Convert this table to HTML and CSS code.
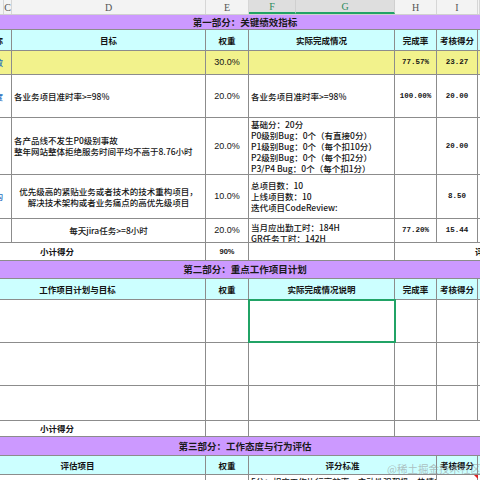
FILE: index.html
```html
<!DOCTYPE html>
<html lang="zh-CN">
<head>
<meta charset="utf-8">
<title>绩效考核表</title>
<link rel="stylesheet" href="styles.css">
</head>
<body>
<div class="sheet">
  <div class="colhead">
    <div class="ch"></div>
    <div class="ch">C</div>
    <div class="ch">D</div>
    <div class="ch">E</div>
    <div class="ch sel">F</div>
    <div class="ch sel">G</div>
    <div class="ch">H</div>
    <div class="ch">I</div>
    <div class="ch"></div>
  </div>

  <div class="sec s1">第一部分：关键绩效指标</div>

  <div class="row head h21">
    <div class="c cut"><span>指标名称</span></div>
    <div class="c ctr">目标</div>
    <div class="c ctr">权重</div>
    <div class="c ctr">实际完成情况</div>
    <div class="c ctr">完成率</div>
    <div class="c ctr">考核得分</div>
    <div class="c nb"></div>
  </div>

  <div class="row yellow h24">
    <div class="c cut blue"><span>关键绩效</span></div>
    <div class="c"></div>
    <div class="c ctr pct">30.0%</div>
    <div class="c"></div>
    <div class="c ctr num">77.57%</div>
    <div class="c ctr num">23.27</div>
    <div class="c nb"></div>
  </div>

  <div class="row h43">
    <div class="c cut blue"><span>项目进度</span></div>
    <div class="c">各业务项目准时率&gt;=98%</div>
    <div class="c ctr pct">20.0%</div>
    <div class="c">各业务项目准时率&gt;=98%</div>
    <div class="c ctr num">100.00%</div>
    <div class="c ctr num">20.00</div>
    <div class="c nb"></div>
  </div>

  <div class="row h57">
    <div class="c cut"></div>
    <div class="c"><div class="txt">各产品线不发生P0级别事故<br>整年网站整体拒绝服务时间平均不高于8.76小时</div></div>
    <div class="c ctr pct">20.0%</div>
    <div class="c"><div class="txt">基础分：20分<br>P0级别Bug：0个（有直接0分）<br>P1级别Bug：0个（每个扣10分）<br>P2级别Bug：0个（每个扣2分）<br>P3/P4 Bug：0个（每个扣1分）</div></div>
    <div class="c"></div>
    <div class="c ctr num">20.00</div>
    <div class="c nb"></div>
  </div>

  <div class="row h44">
    <div class="c cut blue"><span>技术重构</span></div>
    <div class="c ctr"><div class="txt">优先级高的紧贴业务或者技术的技术重构项目，<br>解决技术架构或者业务痛点的高优先级项目</div></div>
    <div class="c ctr pct">10.0%</div>
    <div class="c"><div class="txt">总项目数：10<br>上线项目数：10<br>迭代项目CodeReview:</div></div>
    <div class="c"></div>
    <div class="c ctr num">8.50</div>
    <div class="c nb"></div>
  </div>

  <div class="row h24">
    <div class="c cut"></div>
    <div class="c ctr">每天jira任务&gt;=8小时</div>
    <div class="c ctr pct">20.0%</div>
    <div class="c low"><div class="txt">当月应出勤工时：184H<br>GR任务工时：142H</div></div>
    <div class="c ctr num">77.20%</div>
    <div class="c ctr num">15.44</div>
    <div class="c nb"></div>
  </div>

  <div class="row h18">
    <div class="c span2 subtotal">小计得分</div>
    <div class="c ctr total">90%</div>
    <div class="c"></div>
    <div class="c nb span3 tail">评分</div>
  </div>

  <div class="sec s2">第二部分：重点工作项目计划</div>

  <div class="row head h21">
    <div class="c span2 ctr lefthead">工作项目计划与目标</div>
    <div class="c ctr">权重</div>
    <div class="c ctr">实际完成情况说明</div>
    <div class="c ctr">完成率</div>
    <div class="c ctr">考核得分</div>
    <div class="c nb"></div>
  </div>

  <div class="row h43">
    <div class="c span2"></div>
    <div class="c"></div>
    <div class="c selected"></div>
    <div class="c"></div>
    <div class="c"></div>
    <div class="c nb"></div>
  </div>

  <div class="row h43">
    <div class="c span2"></div>
    <div class="c"></div>
    <div class="c"></div>
    <div class="c"></div>
    <div class="c"></div>
    <div class="c nb"></div>
  </div>

  <div class="row h35">
    <div class="c span2"></div>
    <div class="c"></div>
    <div class="c"></div>
    <div class="c"></div>
    <div class="c"></div>
    <div class="c nb"></div>
  </div>

  <div class="row h16">
    <div class="c span2 subtotal">小计得分</div>
    <div class="c"></div>
    <div class="c"></div>
    <div class="c nb span3"></div>
  </div>

  <div class="sec s3">第三部分：工作态度与行为评估</div>

  <div class="row head h19">
    <div class="c span2 ctr lefthead">评估项目</div>
    <div class="c ctr">权重</div>
    <div class="c span2 ctr">评分标准</div>
    <div class="c ctr">考核得分</div>
    <div class="c nb"></div>
  </div>

  <div class="row h40">
    <div class="c span2"></div>
    <div class="c"></div>
    <div class="c span2 top">5分：相应工作执行高效率，主动性强积极，热情有激情</div>
    <div class="c note"></div>
    <div class="c nb"></div>
  </div>

  <div class="watermark">@稀土掘金技术社区</div>
</div>
</body>
</html>
```

FILE: styles.css
```css
* {
  box-sizing: border-box;
}

html,
body {
  margin: 0;
  padding: 0;
  background: #ffffff;
}

body {
  width: 480px;
  height: 480px;
  overflow: hidden;
  font-family: "Noto Sans CJK SC", "Noto Sans", sans-serif;
  font-size: 8.5px;
  font-weight: 500;
  line-height: 11px;
  color: #141414;
}

.sheet {
  position: relative;
  width: 480px;
  height: 480px;
  overflow: hidden;
}

/* column letters */
.colhead {
  display: grid;
  grid-template-columns: 4px 8px 194px 43px 47px 99px 42px 41px 1fr;
  height: 15px;
  background: #f3f3f3;
  border-bottom: 1px solid #d0d0d0;
}

.ch {
  display: flex;
  align-items: center;
  justify-content: center;
  border-right: 1px solid #d6d6d6;
  font-family: "Liberation Serif", serif;
  font-size: 10px;
  font-weight: 400;
  color: #555555;
  overflow: hidden;
}

.ch.sel {
  background: #dedede;
  color: #2a8a5c;
  border-bottom: 2px solid #21a366;
  border-right-color: #cfcfcf;
}

/* section titles */
.sec {
  display: flex;
  align-items: center;
  justify-content: center;
  padding-left: 10px;
  background: #cc99ff;
  border-bottom: 1px solid #8c8c8c;
  font-size: 9.5px;
  font-weight: 700;
  color: #1a1a1a;
}

.s1 {
  height: 15px;
}

.s2 {
  height: 18px;
}

.s3 {
  height: 19px;
}

/* rows */
.row {
  display: grid;
  grid-template-columns: 12px 194px 43px 146px 42px 41px 1fr;
  border-bottom: 1px solid #8c8c8c;
}

.h16 { height: 16px; }
.h18 { height: 18px; }
.h19 { height: 19px; }
.h21 { height: 21px; }
.h24 { height: 24px; }
.h35 { height: 35px; }
.h40 { height: 40px; }
.h43 { height: 43px; }
.h44 { height: 44px; }
.h57 { height: 57px; }

.head {
  background: #ccffff;
  font-weight: 700;
}

.yellow {
  background: #f2f28c;
}

.c {
  display: flex;
  align-items: center;
  min-width: 0;
  padding: 0 2px;
  border-right: 1px solid #8c8c8c;
  overflow: hidden;
  white-space: nowrap;
}

.c.nb {
  border-right: none;
}

.ctr {
  justify-content: center;
  text-align: center;
}

.txt {
  white-space: nowrap;
}

.low {
  padding-top: 5px;
}

.top {
  align-items: flex-start;
  padding-top: 1px;
}

.span2 {
  grid-column: span 2;
}

.span3 {
  grid-column: span 3;
}

/* clipped text from the hidden column to the left */
.cut {
  justify-content: flex-end;
  padding: 0 8px 0 0;
  border-right: 1px solid #8c8c8c;
}

.blue {
  color: #1f6fc0;
}

.pct {
  font-family: "Liberation Sans", Arial, sans-serif;
  font-size: 9px;
  font-weight: 400;
}

.num {
  font-family: "Liberation Mono", monospace;
  font-size: 7.5px;
  font-weight: 700;
}

.total {
  font-family: "Liberation Sans", Arial, sans-serif;
  font-size: 7.5px;
  font-weight: 700;
}

.subtotal {
  padding-left: 40px;
  font-weight: 700;
}

.lefthead {
  padding-right: 52px;
}

.tail {
  padding-left: 80px;
  font-weight: 700;
}

.selected {
  position: relative;
  overflow: visible;
}

.selected::after {
  content: "";
  position: absolute;
  left: -1px;
  top: -1px;
  right: -2px;
  bottom: -1px;
  border: 2px solid #21a366;
}

.note {
  position: relative;
  overflow: visible;
}

.note::after {
  content: "";
  position: absolute;
  top: 0;
  right: -1px;
  border-top: 4px solid #e02020;
  border-left: 4px solid transparent;
}

.watermark {
  position: absolute;
  left: 387px;
  top: 462px;
  font-size: 10.5px;
  font-weight: 400;
  line-height: 14px;
  color: rgba(150, 150, 150, 0.6);
  white-space: nowrap;
  pointer-events: none;
}
```
